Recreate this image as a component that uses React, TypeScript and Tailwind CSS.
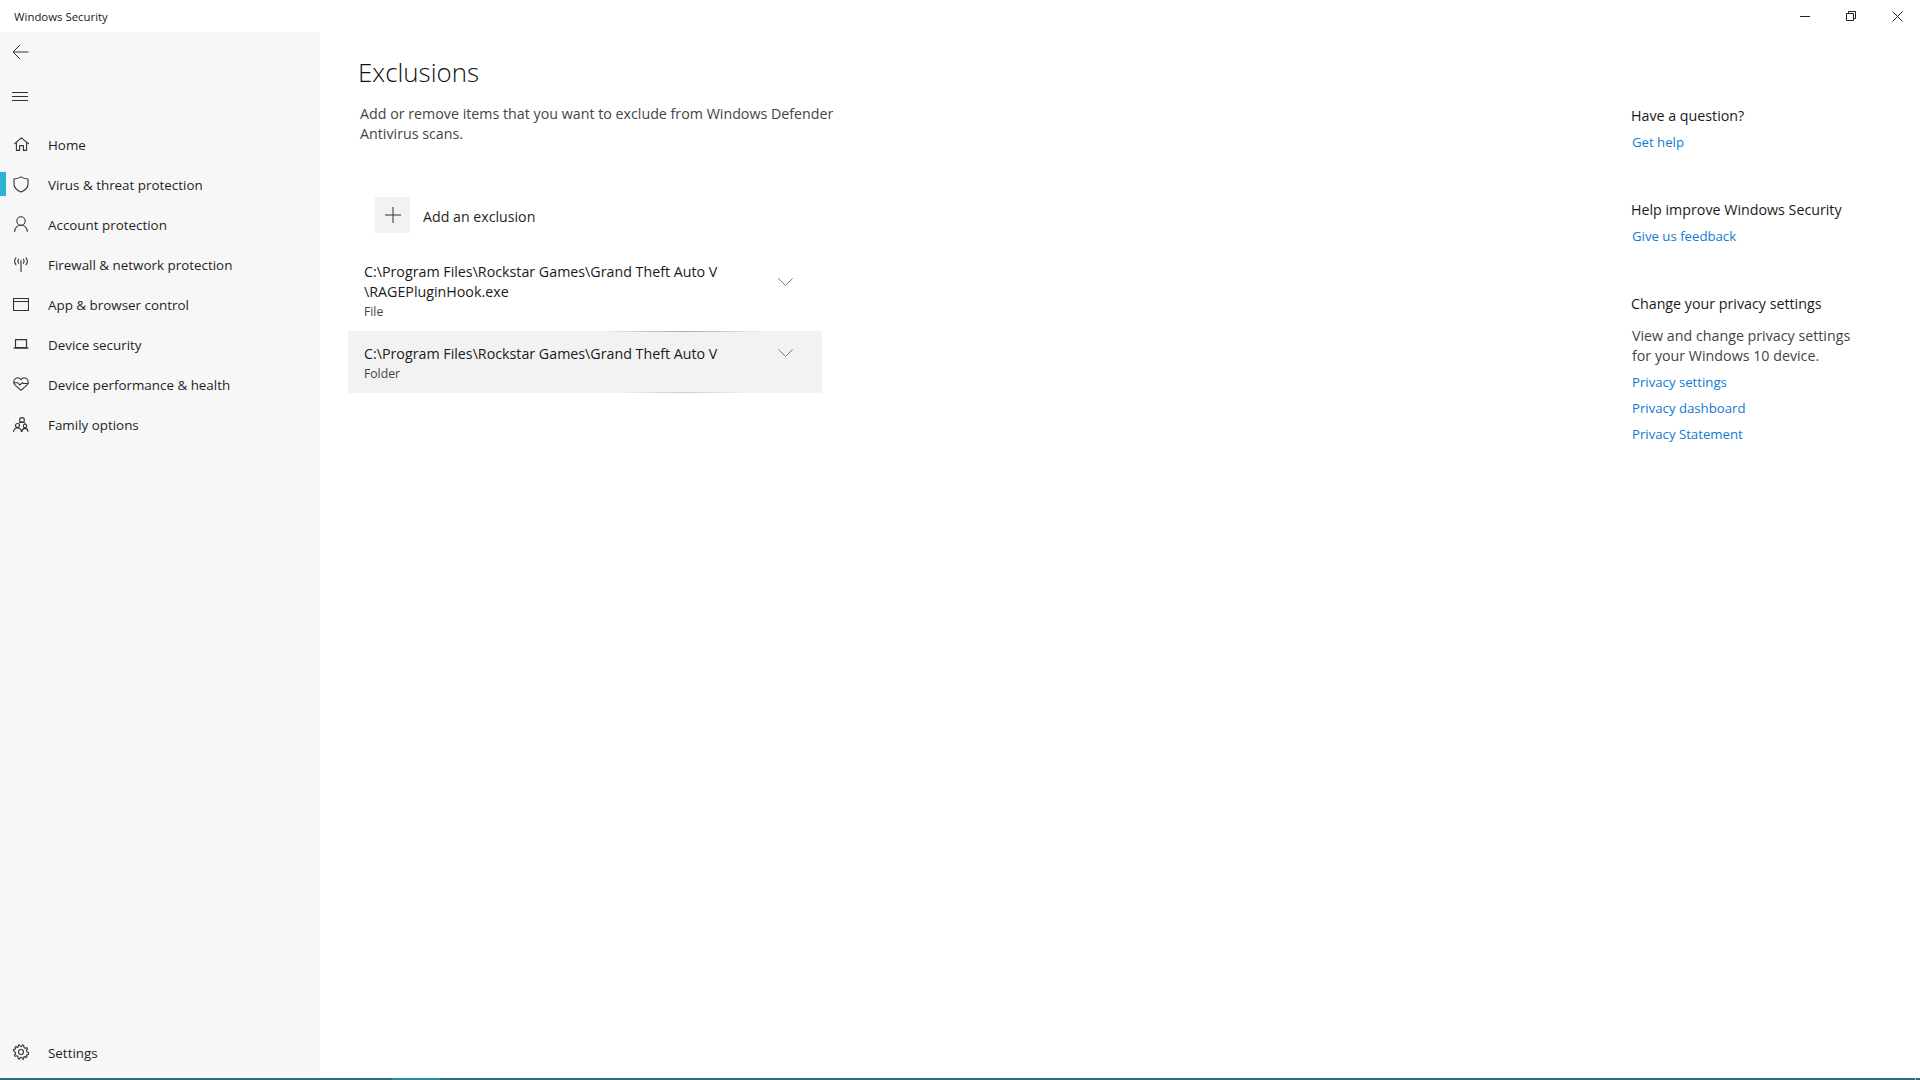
import React from "react";

const FONT = "font-['Open_Sans','Noto_Sans',sans-serif]";

const stroke = {
  fill: "none",
  stroke: "#333",
  strokeWidth: 1.1,
  strokeLinecap: "round" as const,
  strokeLinejoin: "round" as const,
};

const HomeIcon = () => (
  <svg width="15" height="14" viewBox="0 0 15 14" {...stroke}>
    <path d="M.6 6.700 7.500.8l6.900 5.900M2.400 5.400v8h3.200V8.600h3.800v4.800h3.200v-8" />
  </svg>
);
const ShieldIcon = () => (
  <svg width="16" height="17" viewBox="0 0 16 17" {...stroke}>
    <path d="M8 .9c2 1.300 4.300 2 7 2.100v5c0 3.900-2.800 6.300-7 8.100C3.800 14.300 1 11.900 1 8V3c2.700-.1 5-.8 7-2.100Z" />
  </svg>
);
const PersonIcon = () => (
  <svg width="14" height="16" viewBox="0 0 14 16" {...stroke}>
    <circle cx="7" cy="5" r="4.200" />
    <path d="M.7 15.400C1 11.800 3.600 9.200 7 9.200s6 2.600 6.300 6.200" />
  </svg>
);
const AntennaIcon = () => (
  <svg width="16" height="15" viewBox="0 0 16 15" {...stroke}>
    <path d="M8 3.500v11M5.600 2.200c-.8 1.200-.8 2.900 0 4.100M10.400 2.200c.8 1.200.8 2.900 0 4.100M2.900.8C1.500 2.700 1.500 5.800 2.900 7.700M13.100.8c1.400 1.900 1.400 5 0 6.900" />
  </svg>
);
const WindowIcon = () => (
  <svg width="16" height="13" viewBox="0 0 16 13" {...stroke} strokeLinecap="butt" strokeLinejoin="miter">
    <path d="M.5.500h15v12H.5ZM.5 3.500h15" />
  </svg>
);
const LaptopIcon = () => (
  <svg width="16" height="10" viewBox="0 0 16 10" {...stroke} strokeWidth={1.2} strokeLinecap="butt" strokeLinejoin="miter">
    <path d="M2.500.6h11v8h-11ZM.5 9.200h15" />
  </svg>
);
const HeartIcon = () => (
  <svg width="16" height="14" viewBox="0 0 16 14" {...stroke}>
    <path d="M2.200 8.200C.2 6.200.4 3 2.400 1.600c1.900-1.300 4.200-.6 5.600 1 1.400-1.600 3.700-2.300 5.600-1 2 1.400 2.200 4.600.2 6.600L8 13.300 2.200 8.200Z" />
    <path d="M.9 5.800h3.900l2 2.200 2.600-2.400 1 .9h4.700" />
  </svg>
);
const FamilyIcon = () => (
  <svg width="16" height="15" viewBox="0 0 16 15" {...stroke}>
    <circle cx="9" cy="3" r="2.400" />
    <circle cx="4.500" cy="8.500" r="2" />
    <circle cx="12" cy="9" r="1.700" />
    <path d="M.7 14.400c.2-2 1.800-3.400 3.800-3.400s3.600 1.400 3.800 3.400M9 14.400c.2-1.800 1.400-3 3-3s2.800 1.200 3 3M6.400 5.700c.7-.4 1.700-.7 2.600-.7 1.300 0 2.400.5 3.200 1.400" />
  </svg>
);
const GearIcon = () => (
  <svg width="16" height="16" viewBox="0 0 16 16" {...stroke}>
    <circle cx="8" cy="8" r="2.500" />
    <path d="M6.600.8c.2 1.600 1.200 1.900 1.400 1.900s1.200-.3 1.400-1.900l1.500.6c-.4 1.500.3 2.300.5 2.500.2.100 1.100.6 2.400-.3l.8 1.400c-1.300.9-1.100 2-1 2.200s.5 1.300 2 1.300v1.600" />
    <path d="M9.400 15.200c-.2-1.600-1.200-1.900-1.400-1.900s-1.200.3-1.400 1.900l-1.500-.6c.4-1.500-.3-2.300-.5-2.500-.2-.1-1.100-.6-2.400.3l-.8-1.400c1.300-.9 1.100-2 1-2.200S2 7 .5 7V5.500" />
    <path d="M.5 5.500c1.500.1 2-.7 2.100-1L2 3.500l1-1.100 1 .8c.6.3 1 .1 1.100-.1l.5-2.300M15.500 9.100v1.400c-1.500-.1-2 .7-2.100 1l.6 1-1 1.100-1-.8c-.6-.3-1-.1-1.100.1l-.5 2.400" />
  </svg>
);

const navItems = [
  { label: "Home", icon: <HomeIcon /> },
  { label: "Virus & threat protection", icon: <ShieldIcon />, active: true },
  { label: "Account protection", icon: <PersonIcon /> },
  { label: "Firewall & network protection", icon: <AntennaIcon /> },
  { label: "App & browser control", icon: <WindowIcon /> },
  { label: "Device security", icon: <LaptopIcon /> },
  { label: "Device performance & health", icon: <HeartIcon /> },
  { label: "Family options", icon: <FamilyIcon /> },
];

function NavRow({ label, icon, active }: { label: string; icon: React.ReactNode; active?: boolean }) {
  return (
    <div className="relative flex h-10 items-center">
      {active && <div className="absolute left-0 top-[7px] h-6 w-[6px] bg-[#2ab4d2]" />}
      <div className="flex w-[42px] -translate-y-px justify-center">{icon}</div>
      <span className="ml-[6px] text-[13.4px] text-[#1f1f1f]">{label}</span>
    </div>
  );
}

const Chevron = () => (
  <svg width="15" height="8" viewBox="0 0 15 8" fill="none" stroke="#777" strokeWidth="1">
    <path d="M.4.400 7.500 7.500 14.600.4" />
  </svg>
);

function Link({ children }: { children: React.ReactNode }) {
  return <div className="h-[26px] pl-[1px] text-[13.2px] leading-[26px] text-[#0f7ad4]">{children}</div>;
}

export default function App() {
  return (
    <div className={`flex h-[1080px] w-[1920px] flex-col overflow-hidden bg-white ${FONT}`}>
      {/* Title bar */}
      <div className="flex h-8 shrink-0 items-center justify-between">
        <span className="pl-[14px] pt-[1px] text-[11.4px] text-[#1a1a1a]">Windows Security</span>
        <div className="flex items-center">
          <div className="flex h-8 w-[46px] items-center justify-center">
            <svg width="10" height="10" viewBox="0 0 10 10" stroke="#222" strokeWidth="1"><path d="M0 5.500h10" /></svg>
          </div>
          <div className="flex h-8 w-[46px] items-center justify-center">
            <svg width="10" height="10" viewBox="0 0 10 10" fill="none" stroke="#222" strokeWidth="1"><path d="M.5 2.500h7v7h-7ZM2.500 2.500v-2h7v7h-2" /></svg>
          </div>
          <div className="flex h-8 w-[46px] items-center justify-center">
            <svg width="11" height="11" viewBox="0 0 11 11" stroke="#222" strokeWidth="1"><path d="m.5.500 10 10M10.500.500l-10 10" /></svg>
          </div>
        </div>
      </div>

      <div className="flex min-h-0 flex-1">
        {/* Sidebar */}
        <aside className="flex w-[320px] shrink-0 flex-col bg-[#f7f7f7]">
          <div className="flex h-10 items-center pl-[12px]">
            <svg width="17" height="16" viewBox="0 0 17 16" fill="none" stroke="#333" strokeWidth="1"><path d="M16.500 8H1M8 1 1 8l7 7" /></svg>
          </div>
          <div className="mt-[5px] flex h-10 items-center pl-[12px]">
            <svg width="16" height="10" viewBox="0 0 16 10" stroke="#333" strokeWidth="1"><path d="M0 .500h16M0 4.500h16M0 8.500h16" /></svg>
          </div>
          <nav className="mt-[8px]">
            {navItems.map((item) => (
              <NavRow key={item.label} {...item} />
            ))}
          </nav>
          <div className="mt-auto mb-[5px]">
            <NavRow label="Settings" icon={<GearIcon />} />
          </div>
        </aside>

        {/* Main */}
        <main className="flex-1 pl-[37px]">
          <h1 className="mt-[20px] h-[40px] pl-[1px] text-[25.9px] font-light leading-[40px] text-[#111]">Exclusions</h1>
          <p className="mt-[12px] w-[490px] pl-[3px] text-[14.25px] leading-[20px] text-[#444]">
            Add or remove items that you want to exclude from Windows Defender Antivirus scans.
          </p>
          <div className="mt-[53px] flex items-center pl-[18px]">
            <div className="flex h-9 w-[35px] items-center justify-center bg-[#f2f2f2]">
              <svg width="16" height="16" viewBox="0 0 16 16" stroke="#333" strokeWidth="1"><path d="M8 0v16M0 8h16" /></svg>
            </div>
            <span className="ml-[13px] pt-[3px] text-[14.2px] text-[#1f1f1f]">Add an exclusion</span>
          </div>

          <div className="mt-[16px] h-[82px] w-[474px] -ml-[9px] px-4">
            <div className="flex justify-between pt-[13px]">
              <div>
                <div className="w-[380px] text-[14.25px] leading-[20px] text-[#1a1a1a]">
                  C:\Program Files\Rockstar Games\Grand Theft Auto V
                  <br />
                  \RAGEPluginHook.exe
                </div>
                <div className="text-[12.2px] leading-[20px] text-[#444]">File</div>
              </div>
              <div className="pt-[16px] pr-[13px]"><Chevron /></div>
            </div>
          </div>

          <div className="relative -ml-[9px] h-[62px] w-[474px] bg-[#f2f2f2] px-4">
            <div className="absolute left-[250px] top-0 h-px w-[170px] bg-[linear-gradient(90deg,transparent,#aaa,transparent)]" />
            <div className="absolute bottom-0 left-[270px] h-px w-[130px] bg-[linear-gradient(90deg,transparent,#ccc,transparent)]" />
            <div className="flex justify-between pt-[13px]">
              <div>
                <div className="text-[14.25px] leading-[20px] text-[#1a1a1a]">C:\Program Files\Rockstar Games\Grand Theft Auto V</div>
                <div className="text-[12.2px] leading-[20px] text-[#444]">Folder</div>
              </div>
              <div className="pt-[5px] pr-[13px]"><Chevron /></div>
            </div>
          </div>
        </main>

        {/* Right rail */}
        <aside className="w-[289px] shrink-0 pt-[71px]">
          <div className="h-[26px] text-[14.25px] leading-[26px] text-[#1a1a1a]">Have a question?</div>
          <Link>Get help</Link>
          <div className="mt-[42px] h-[26px] text-[14.25px] leading-[26px] text-[#1a1a1a]">Help improve Windows Security</div>
          <Link>Give us feedback</Link>
          <div className="mt-[42px] h-[26px] text-[14.25px] leading-[26px] text-[#1a1a1a]">Change your privacy settings</div>
          <p className="mt-[9px] w-[225px] pl-[1px] text-[14.25px] leading-[20px] text-[#444]">
            View and change privacy settings for your Windows 10 device.
          </p>
          <div className="mt-[3px]">
            <Link>Privacy settings</Link>
            <Link>Privacy dashboard</Link>
            <Link>Privacy Statement</Link>
          </div>
        </aside>
      </div>

      {/* Desktop strip under the window */}
      <div className="flex h-[2px] shrink-0 bg-[#2f6c73]">
        <div className="ml-[392px] w-[48px] bg-[#2a8a9e]" />
        <div className="ml-[1475px] w-px bg-[#9fc4c6]" />
      </div>
    </div>
  );
}
